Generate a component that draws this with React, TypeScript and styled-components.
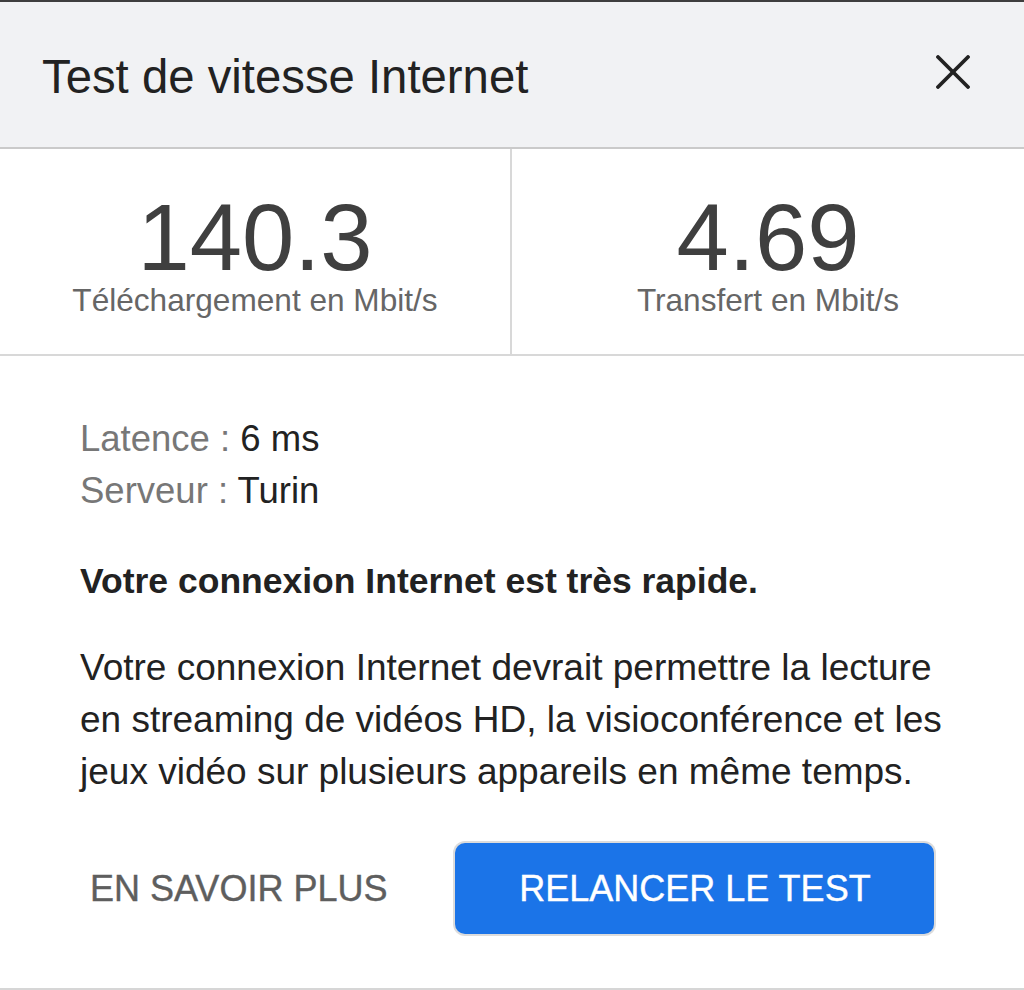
import { createGlobalStyle, styled } from 'styled-components';

const GlobalStyle = createGlobalStyle`
  html, body {
    margin: 0;
    padding: 0;
    background: #fff;
  }
  body {
    font-family: 'Liberation Sans', Arial, Helvetica, sans-serif;
    -webkit-font-smoothing: antialiased;
  }
`;

const Sheet = styled.div`
  width: 1024px;
  height: 990px;
  display: flex;
  flex-direction: column;
  border-top: 2px solid #3e3e3e;
  box-sizing: border-box;
  background: #fff;
`;

const Header = styled.header`
  height: 147px;
  box-sizing: border-box;
  display: flex;
  align-items: center;
  justify-content: space-between;
  padding: 0 54px 0 42px;
  background: #f1f2f4;
  border-bottom: 2px solid #cacaca;
`;

const Title = styled.h1`
  margin: 0;
  padding-top: 5px;
  font-size: 47.3px;
  font-weight: 400;
  line-height: 1;
  color: #222;
`;

const CloseButton = styled.button`
  display: flex;
  padding: 0;
  margin-bottom: 6px;
  border: none;
  background: none;
  color: #222;
  cursor: pointer;
`;

const Stats = styled.section`
  display: grid;
  grid-template-columns: 1fr 1fr;
  border-bottom: 2px solid #d8d8d8;
`;

const Stat = styled.div<{ $divider?: boolean }>`
  display: flex;
  flex-direction: column;
  align-items: center;
  padding: 45px 0 38px;
  border-right: ${(props) => (props.$divider ? '2px solid #d8d8d8' : 'none')};
`;

const StatValue = styled.div`
  font-size: 94px;
  line-height: 88px;
  color: #3f3f3f;
`;

const StatLabel = styled.div`
  margin-top: 3px;
  font-size: 31.6px;
  line-height: 31px;
  color: #666;
`;

const Body = styled.section`
  flex: 1;
  padding: 57px 70px 0 80px;
  border-bottom: 2px solid #d6d6d6;
  font-size: 36.5px;
  line-height: 52px;
  color: #222;
`;

const InfoRow = styled.div`
  color: #222;
`;

const InfoKey = styled.span`
  color: #777;
`;

const Headline = styled.p`
  margin: 38px 0 0;
  font-weight: 700;
  font-size: 35.5px;
  color: #222;
`;

const Paragraph = styled.p`
  margin: 35px 0 0;
  font-size: 37px;
`;

const Actions = styled.div`
  display: flex;
  align-items: center;
  gap: 60px;
  margin-top: 45px;
`;

const TextButton = styled.button`
  padding: 0 8px 0 10px;
  border: none;
  background: none;
  font-family: inherit;
  font-size: 36px;
  font-weight: 500;
  color: #5e5e5e;
  -webkit-text-stroke: 0.4px #5e5e5e;
  cursor: pointer;
`;

const PrimaryButton = styled.button`
  width: 479px;
  height: 91px;
  border: none;
  border-radius: 10px;
  background: #1b74e8;
  box-shadow: 0 0 0 2px #dcdcdc;
  font-family: inherit;
  font-size: 36px;
  font-weight: 500;
  color: #fff;
  -webkit-text-stroke: 0.4px #fff;
  cursor: pointer;
`;

function CloseIcon() {
  return (
    <svg width="34" height="34" viewBox="0 0 34 34" fill="none" stroke="currentColor" strokeWidth="3.8" strokeLinecap="round">
      <path d="M2 2 32 32" />
      <path d="M32 2 2 32" />
    </svg>
  );
}

export default function App() {
  return (
    <>
      <GlobalStyle />
      <Sheet>
        <Header>
          <Title>Test de vitesse Internet</Title>
          <CloseButton type="button" aria-label="Fermer">
            <CloseIcon />
          </CloseButton>
        </Header>
        <Stats>
          <Stat $divider>
            <StatValue>140.3</StatValue>
            <StatLabel>Téléchargement en Mbit/s</StatLabel>
          </Stat>
          <Stat>
            <StatValue>4.69</StatValue>
            <StatLabel>Transfert en Mbit/s</StatLabel>
          </Stat>
        </Stats>
        <Body>
          <InfoRow>
            <InfoKey>Latence : </InfoKey>6 ms
          </InfoRow>
          <InfoRow>
            <InfoKey>Serveur : </InfoKey>Turin
          </InfoRow>
          <Headline>Votre connexion Internet est très rapide.</Headline>
          <Paragraph>
            Votre connexion Internet devrait permettre la lecture en streaming de vidéos HD, la visioconférence et
            les jeux vidéo sur plusieurs appareils en même temps.
          </Paragraph>
          <Actions>
            <TextButton type="button">EN SAVOIR PLUS</TextButton>
            <PrimaryButton type="button">RELANCER LE TEST</PrimaryButton>
          </Actions>
        </Body>
      </Sheet>
    </>
  );
}
